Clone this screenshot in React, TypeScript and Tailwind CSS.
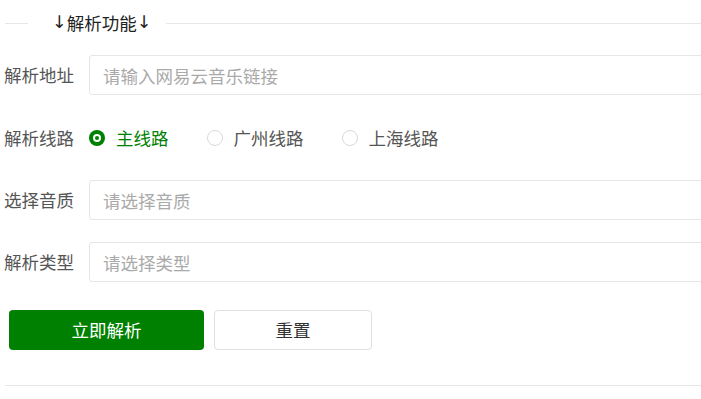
import { useState } from 'react'

const LINES = [
  { key: 'main', label: '主线路' },
  { key: 'gz', label: '广州线路' },
  { key: 'sh', label: '上海线路' },
]

function Field({ label, placeholder, className }: { label: string; placeholder: string; className: string }) {
  return (
    <div className={`flex items-center h-[40px] ${className}`}>
      <label className="w-[89px] shrink-0 pl-[4px] text-[17.5px] leading-[40px] text-[#555]">{label}</label>
      <input
        type="text"
        placeholder={placeholder}
        className="h-[40px] w-[640px] shrink-0 rounded-[3px] border border-[#e6e6e6] bg-white pl-[13px] text-[17.5px] text-[#333] outline-none placeholder:text-[#aaa]"
      />
    </div>
  )
}

export default function App() {
  const [line, setLine] = useState('main')

  return (
    <div className="w-[701px] h-[399px] overflow-hidden bg-white font-['Microsoft_YaHei','Noto_Sans_CJK_SC',sans-serif]">
      {/* legend */}
      <div className="flex items-center h-[46px] pl-[5px]">
        <div className="w-[23px] h-px bg-[#e6e6e6]" />
        <div className="ml-[24px] flex items-center shrink-0 whitespace-nowrap text-[17.5px] text-[#222] leading-none">
          <span className="font-['DejaVu_Sans',sans-serif]">↓</span>
          <span>解析功能</span>
          <span className="font-['DejaVu_Sans',sans-serif]">↓</span>
        </div>
        <div className="ml-[15px] flex-1 h-px bg-[#e6e6e6]" />
      </div>

      <Field label="解析地址" placeholder="请输入网易云音乐链接" className="mt-[9px]" />

      {/* line picker */}
      <div className="flex items-center h-[40px] mt-[23px]">
        <span className="w-[89px] shrink-0 pl-[4px] text-[17.5px] text-[#555]">解析线路</span>
        <div className="flex items-center">
          {LINES.map((l, i) => {
            const on = line === l.key
            return (
              <button
                key={l.key}
                onClick={() => setLine(l.key)}
                className={`flex items-center ${i > 0 ? 'ml-[38px]' : ''}`}
              >
                {on ? (
                  <span className="flex items-center justify-center w-[16px] h-[16px] rounded-full bg-[#008000]">
                    <span className="flex items-center justify-center w-[8px] h-[8px] rounded-full bg-white">
                      <span className="w-[4px] h-[4px] rounded-full bg-[#008000]" />
                    </span>
                  </span>
                ) : (
                  <span className="w-[16px] h-[16px] rounded-full border border-[#d9d9d9]" />
                )}
                <span className={`ml-[11px] text-[17.5px] ${on ? 'text-[#008000]' : 'text-[#555]'}`}>{l.label}</span>
              </button>
            )
          })}
        </div>
      </div>

      <Field label="选择音质" placeholder="请选择音质" className="mt-[22px]" />
      <Field label="解析类型" placeholder="请选择类型" className="mt-[22px]" />

      {/* actions */}
      <div className="flex mt-[28px] pl-[9px] gap-[10px]">
        <button className="w-[195px] h-[40px] rounded-[4px] bg-[#008000] text-white text-[17.5px]">立即解析</button>
        <button className="w-[158px] h-[40px] rounded-[4px] border border-[#e0e0e0] bg-white text-[#333] text-[17.5px]">重置</button>
      </div>

      <div className="mt-[35px] ml-[5px] h-px bg-[#e6e6e6]" />
    </div>
  )
}
